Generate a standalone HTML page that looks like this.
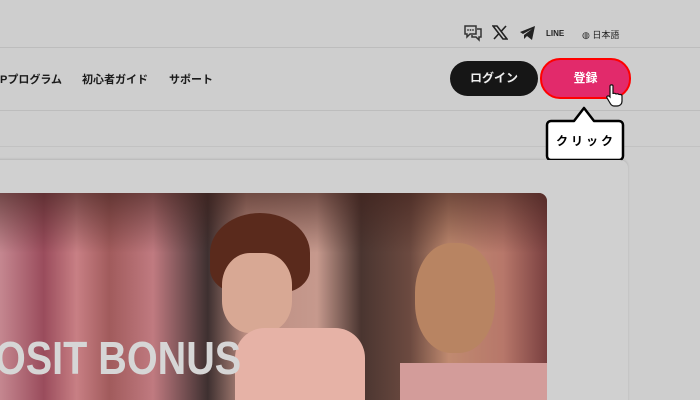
<!DOCTYPE html>
<html><head><meta charset="utf-8"><style>
html,body{margin:0;width:700px;height:400px;overflow:hidden}
body{background:#cecece;font-family:"Liberation Sans","Noto Sans CJK JP",sans-serif;position:relative}
.a{position:absolute}
.line{position:absolute;left:0;width:700px;height:1px;background:#bdbdbd}
.nav{font-size:11px;font-weight:bold;color:#1a1a1a;top:71px}
</style></head><body>
<div class="line" style="top:47px"></div>
<div class="line" style="top:110px"></div>
<div class="line" style="top:146px;background:#c2c2c2"></div>
<svg class="a" style="left:463px;top:24px" width="20" height="18" viewBox="0 0 20 18"><path d="M2 2h11v8H7l-3 3v-3H2z M14 5h4v8h-2v3l-3-3H9v-2" fill="none" stroke="#333" stroke-width="1.5"/><circle cx="5" cy="6" r="0.9" fill="#333"/><circle cx="7.5" cy="6" r="0.9" fill="#333"/><circle cx="10" cy="6" r="0.9" fill="#333"/></svg>
<svg class="a" style="left:492px;top:25px" width="16" height="15" viewBox="0 0 16 15"><path d="M1 1h4l10 13h-4z" fill="none" stroke="#222" stroke-width="1.6"/><path d="M14 1L9 6.5M2 14l5-5.5" stroke="#222" stroke-width="1.6"/></svg>
<svg class="a" style="left:519px;top:26px" width="17" height="14" viewBox="0 0 17 14"><path d="M1 6L16 0 13 14 8 10 5 13 5 9 13 3 4 8z" fill="#222"/></svg>
<div class="a" style="left:546px;top:29px;font-size:8px;font-weight:bold;color:#222">LINE</div>
<div class="a" style="left:582px;top:28px;font-size:9px;color:#222">◍ 日本語</div>
<div class="a nav" style="left:0">Pプログラム</div>
<div class="a nav" style="left:82px">初心者ガイド</div>
<div class="a nav" style="left:169px">サポート</div>
<div class="a" style="left:450px;top:61px;width:88px;height:35px;border-radius:18px;background:#161616;color:#eee;font-size:12px;font-weight:bold;text-align:center;line-height:35px">ログイン</div>
<div class="a" style="left:540px;top:58px;width:87px;height:37px;border-radius:20px;background:#e22a6b;border:2px solid #f00;color:#fff;font-size:12px;font-weight:bold;text-align:center;line-height:37px">登録</div>
<svg class="a" style="left:605px;top:84px" width="20" height="24" viewBox="0 0 20 24"><path d="M5 2c0-1.5 3-1.5 3 0v8c0-1 3-1 3 0.5 0-1 3-1 3 .5 0-.8 3-.8 3 1v5c0 3-2 5-5 5H9c-2 0-3-1-4-3L2 14c-1-1.5 1-3 2.5-1.5L5 13z" fill="#fff" stroke="#111" stroke-width="1.2"/></svg>
<svg class="a" style="left:543px;top:104px" width="84" height="58" viewBox="0 0 84 58"><path d="M8 17h23l10-13 10 13h25a4 4 0 0 1 4 4v31a4 4 0 0 1-4 4H8a4 4 0 0 1-4-4V21a4 4 0 0 1 4-4z" fill="#fff" stroke="#000" stroke-width="2.5" stroke-linejoin="round"/></svg>
<div class="a" style="left:545px;top:132px;width:82px;text-align:center;font-size:12px;font-weight:bold;letter-spacing:3px">クリック</div>
<div class="a" style="left:-10px;top:160px;width:638px;height:260px;background:#d0d0d0;border-radius:8px;box-shadow:0 -1px 2px rgba(0,0,0,.12)"></div>
<div class="a" style="left:0;top:193px;width:547px;height:207px;border-radius:0 8px 0 0;overflow:hidden;background:linear-gradient(90deg,#c58790 0%,#9a4c5c 8%,#c87f84 14%,#a15b5c 20%,#c07a80 28%,#3e3030 38%,#bd8e82 45%,#c6998d 58%,#4a3530 66%,#6c4a40 75%,#c08a70 82%,#b7776a 92%,#7a4040 100%)">
<div class="a" style="left:0;top:0;width:547px;height:60px;background:linear-gradient(180deg,rgba(60,30,25,.6),rgba(0,0,0,0))"></div>
<div class="a" style="left:210px;top:20px;width:100px;height:80px;border-radius:50% 50% 30% 30%;background:#5a2a1c"></div>
<div class="a" style="left:222px;top:60px;width:70px;height:80px;border-radius:40%;background:#d8a894"></div>
<div class="a" style="left:235px;top:135px;width:130px;height:80px;border-radius:30px 30px 0 0;background:#e6b2a6"></div>
<div class="a" style="left:415px;top:50px;width:80px;height:110px;border-radius:45%;background:#b88462"></div>
<div class="a" style="left:400px;top:170px;width:147px;height:50px;background:#d39c9a"></div>
<div class="a" style="left:-5px;top:142px;font-size:46px;line-height:46px;font-weight:bold;color:#d6d6d6;transform:scaleX(0.86);transform-origin:0 0;white-space:nowrap">OSIT BONUS</div>
</div>
</body></html>
